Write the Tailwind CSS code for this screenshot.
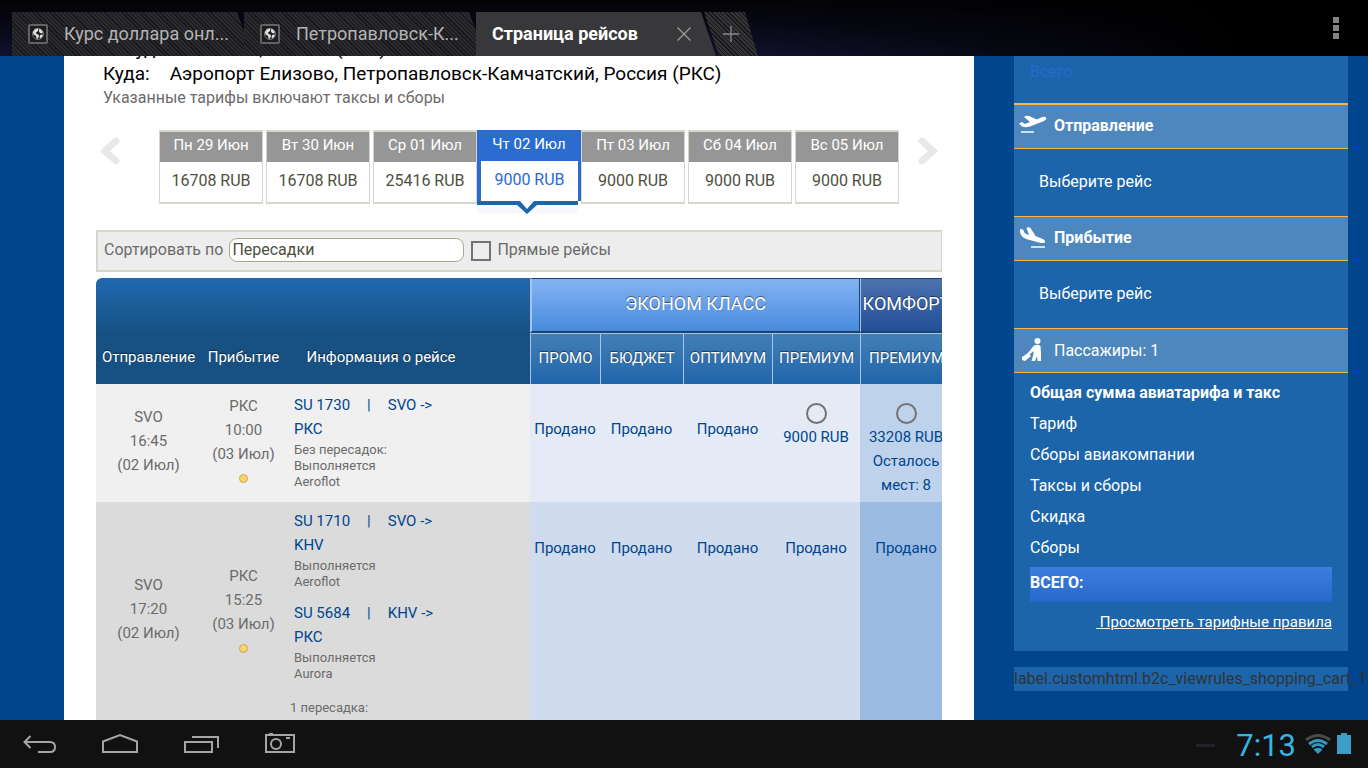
<!DOCTYPE html>
<html lang="ru">
    <head>
        <meta charset="UTF-8" />
        <meta name="viewport" content="width=device-width, initial-scale=1.0" />
        <title>Страница рейсов</title>
        <script src="https://cdn.jsdelivr.net/npm/@tailwindcss/browser@4"></script>
    </head>
    <body class="flex h-screen flex-col overflow-hidden bg-[#00458d] font-[Roboto,sans-serif]">
        <!-- browser tabs -->
        <header class="flex h-14 shrink-0 items-end bg-linear-to-b from-[#030306] to-[#11112c] pl-3">
            <button class="flex h-11 w-[232px] items-center gap-4 bg-[repeating-linear-gradient(45deg,#17171b_0px_1px,#2a2a2e_1px_3px)] pl-4 text-left text-lg text-[#b4b4b4] [clip-path:polygon(0_0,calc(100%-7px)_0,100%_20px,100%_100%,0_100%)]">
                <svg class="h-5 w-5 shrink-0" viewBox="0 0 20 20">
                    <rect x="1" y="1" width="18" height="18" rx="1" fill="#1c1c1c" stroke="#626262" stroke-width="2" />
                    <circle cx="10" cy="10" r="5.5" fill="#1c1c1c" stroke="#777" />
                    <path d="M5 8l2-3 2.500-.5 1 1.500-1 1.500-1.500 1 .5 1.500 2 .5.5 2-1.500 2.500-1-.5-.5-2.500-2.500-1.500zM11 5l2 .5 2 2.500-1 1.500-2-.5-1-1.500zM12 11l2-.5 1 .5-1 2-1.500 1.500-1-1z" fill="#ddd" />
                </svg>
                <span>Курс доллара онл...</span>
            </button>
            <button class="flex h-11 w-[232px] items-center gap-4 bg-[repeating-linear-gradient(45deg,#17171b_0px_1px,#2a2a2e_1px_3px)] pl-4 text-left text-lg text-[#b4b4b4] [clip-path:polygon(0_0,calc(100%-7px)_0,100%_20px,100%_100%,0_100%)]">
                <svg class="h-5 w-5 shrink-0" viewBox="0 0 20 20">
                    <rect x="1" y="1" width="18" height="18" rx="1" fill="#1c1c1c" stroke="#626262" stroke-width="2" />
                    <circle cx="10" cy="10" r="5.5" fill="#1c1c1c" stroke="#777" />
                    <path d="M5 8l2-3 2.500-.5 1 1.500-1 1.500-1.500 1 .5 1.500 2 .5.5 2-1.500 2.500-1-.5-.5-2.500-2.500-1.500zM11 5l2 .5 2 2.500-1 1.500-2-.5-1-1.500zM12 11l2-.5 1 .5-1 2-1.500 1.500-1-1z" fill="#ddd" />
                </svg>
                <span>Петропавловск-К...</span>
            </button>
            <div class="flex h-11 w-60 items-center justify-between bg-[#38383a] pr-6 pl-4 text-lg font-bold text-white [clip-path:polygon(0_0,calc(100%-15px)_0,100%_100%,0_100%)]">
                <button>Страница рейсов</button>
                <button aria-label="Закрыть" class="text-[#9b9b9b]">
                    <svg class="h-4 w-4" viewBox="0 0 16 16" fill="none" stroke="currentColor" stroke-width="1.3"><path d="M1.500 1.500l13 13M14.500 1.500l-13 13" /></svg>
                </button>
            </div>
            <button aria-label="Новая вкладка" class="-ml-3 flex h-11 w-[54px] items-center justify-center bg-[repeating-linear-gradient(45deg,#17171b_0px_1px,#333335_1px_3px)] text-[#8a8a8a] [clip-path:polygon(0_0,calc(100%-13px)_0,100%_100%,15px_100%)]">
                <svg class="h-[18px] w-[18px]" viewBox="0 0 18 18" fill="none" stroke="currentColor" stroke-width="1.3"><path d="M9 1v16M1 9h16" /></svg>
            </button>
            <div class="flex h-full grow items-center justify-end bg-linear-to-r from-transparent to-black to-80% pr-[29px]">
                <button aria-label="Меню" class="flex flex-col gap-[2px]">
                    <span class="h-[6px] w-[6px] bg-[#858585]"></span>
                    <span class="h-[6px] w-[6px] bg-[#858585]"></span>
                    <span class="h-[6px] w-[6px] bg-[#858585]"></span>
                </button>
            </div>
        </header>

        <div class="flex min-h-0 grow overflow-hidden">
            <main class="ml-16 min-w-0 grow overflow-hidden bg-white px-8">
                <div class="-mt-5 pl-[7px] text-[19px] leading-[25px] text-black">
                    <p>Откуда:<span class="ml-5">Москва, Россия (SVO)</span></p>
                    <p>Куда:<span class="ml-5">Аэропорт Елизово, Петропавловск-Камчатский, Россия (РКС)</span></p>
                    <p class="text-base leading-6 text-[#6b6b6b]">Указанные тарифы включают таксы и сборы</p>
                </div>

                <!-- price by day -->
                <div class="mt-5 flex h-[74px] pr-[2px] pl-[2px]">
                    <button aria-label="Предыдущие даты" class="mt-[6px] h-[30px] w-6">
                        <svg class="h-full w-full" viewBox="0 0 24 30" fill="none" stroke="#e8e8e8" stroke-width="7" stroke-linecap="round"><path d="M18 5L7 15l11 10" /></svg>
                    </button>
                    <div class="ml-[37px] flex gap-[3px] text-center text-base text-[#4f4f40]">
                        <button class="flex w-[104px] flex-col border border-t-2 border-b-2 border-[#d5d6cc]">
                            <span class="h-[30px] w-full bg-[#969696] text-[15px] leading-[26px] text-white">Пн 29 Июн</span>
                            <span class="w-full leading-[38px]">16708 RUB</span>
                        </button>
                        <button class="flex w-[104px] flex-col border border-t-2 border-b-2 border-[#d5d6cc]">
                            <span class="h-[30px] w-full bg-[#969696] text-[15px] leading-[26px] text-white">Вт 30 Июн</span>
                            <span class="w-full leading-[38px]">16708 RUB</span>
                        </button>
                        <button class="flex w-[104px] flex-col border border-t-2 border-b-2 border-[#d5d6cc]">
                            <span class="h-[30px] w-full bg-[#969696] text-[15px] leading-[26px] text-white">Ср 01 Июл</span>
                            <span class="w-full leading-[38px]">25416 RUB</span>
                        </button>
                        <button class="relative -mx-[3px] flex w-[104px] flex-col text-[#2a6ccf]">
                            <span class="h-[31px] w-full bg-[#2a6ccf] text-[15px] leading-[28px] text-white">Чт 02 Июл</span>
                            <span class="h-10 w-full border-r-[3px] border-l-4 border-[#2a6ccf] bg-white leading-[38px]">9000 RUB</span>
                            <svg class="absolute top-[71px] left-0 h-[13px] w-[101px]" viewBox="0 0 101 13">
                                <path d="M0 0h101v13H0z" fill="#f7f9ff" />
                                <path d="M0 0h101v4H60L50 13 40 4H0z" fill="#1b66ad" />
                                <path d="M43 0h14l-7 8z" fill="#fff" />
                            </svg>
                        </button>
                        <button class="flex w-[104px] flex-col border border-t-2 border-b-2 border-[#d5d6cc]">
                            <span class="h-[30px] w-full bg-[#969696] text-[15px] leading-[26px] text-white">Пт 03 Июл</span>
                            <span class="w-full leading-[38px]">9000 RUB</span>
                        </button>
                        <button class="flex w-[104px] flex-col border border-t-2 border-b-2 border-[#d5d6cc]">
                            <span class="h-[30px] w-full bg-[#969696] text-[15px] leading-[26px] text-white">Сб 04 Июл</span>
                            <span class="w-full leading-[38px]">9000 RUB</span>
                        </button>
                        <button class="flex w-[104px] flex-col border border-t-2 border-b-2 border-[#d5d6cc]">
                            <span class="h-[30px] w-full bg-[#969696] text-[15px] leading-[26px] text-white">Вс 05 Июл</span>
                            <span class="w-full leading-[38px]">9000 RUB</span>
                        </button>
                    </div>
                    <button aria-label="Следующие даты" class="mt-[6px] ml-auto h-[30px] w-6">
                        <svg class="h-full w-full" viewBox="0 0 24 30" fill="none" stroke="#e8e8e8" stroke-width="7" stroke-linecap="round"><path d="M6 5l11 10L6 25" /></svg>
                    </button>
                </div>

                <form class="mt-[26px] flex h-[42px] items-center border-2 border-r border-[#d5d6cc] bg-[#ededed] pb-[2px] pl-[6px] text-base text-[#6b6b6b]">
                    <label for="sort">Сортировать по</label>
                    <select id="sort" class="ml-[6px] h-6 w-[235px] appearance-none rounded-lg border border-[#a9a990] bg-white pl-[2px] leading-5 text-[#4f4f40]">
                        <option>Пересадки</option>
                    </select>
                    <input type="checkbox" id="direct" class="mt-[2px] ml-[7px] h-5 w-5 appearance-none border-2 border-[#737373]" />
                    <label for="direct" class="ml-[6px]">Прямые рейсы</label>
                </form>

                <div class="mt-[6px] overflow-hidden rounded-tl-md">
                    <table class="w-[856px] table-fixed border-separate border-spacing-0 text-center text-[15px] leading-6 text-[#00458d]">
                        <colgroup>
                            <col class="w-[105px]" />
                            <col class="w-[85px]" />
                            <col class="w-[244px]" />
                            <col class="w-[70px]" />
                            <col class="w-[83px]" />
                            <col class="w-[89px]" />
                            <col class="w-[88px]" />
                            <col />
                        </colgroup>
                        <thead class="text-white [&_th]:font-normal [&_th]:text-shadow-[0_-1px_1px_rgb(0_0_0/0.5)]">
                            <tr class="h-[55px]">
                                <th rowspan="2" class="bg-linear-to-b from-[#1f69b0] to-[#175082] to-55% pb-[15px] align-bottom">Отправление</th>
                                <th rowspan="2" class="bg-linear-to-b from-[#1f69b0] to-[#175082] to-55% pb-[15px] align-bottom">Прибытие</th>
                                <th rowspan="2" class="bg-linear-to-b from-[#1f69b0] to-[#175082] to-55% pr-[54px] pb-[15px] align-bottom">Информация о рейсе</th>
                                <th colspan="4" class="border-t border-r border-b-2 border-l-2 border-t-[#17446f] border-r-[#17446f] border-b-[#17446f] border-l-[#a9c3ea] bg-linear-to-b from-[#85b3f3] to-[#468bdd] pb-[2px] text-lg">ЭКОНОМ КЛАСС</th>
                                <th class="border-t border-b-2 border-l border-t-[#17446f] border-b-[#17446f] border-l-[#a9c3ea] bg-linear-to-b from-[#4c73af] to-[#234f97] pb-[2px] text-lg"><span class="-mx-4">КОМФОРТ</span></th>
                            </tr>
                            <tr class="h-[51px] [&_th]:border-t [&_th]:border-l [&_th]:border-[#a9c3ea] [&_th]:bg-linear-to-b [&_th]:from-[#427fb6] [&_th]:to-[#2065ab] [&_th]:pb-[3px]">
                                <th>ПРОМО</th>
                                <th>БЮДЖЕТ</th>
                                <th>ОПТИМУМ</th>
                                <th>ПРЕМИУМ</th>
                                <th>ПРЕМИУМ</th>
                            </tr>
                        </thead>
                        <tbody>
                            <tr class="h-[118px]">
                                <td class="bg-[#f0f0f0] pb-1 text-[#6b6b6b]">SVO<br />16:45<br />(02 Июл)</td>
                                <td class="bg-[#f0f0f0] text-[#6b6b6b]">
                                    РКС<br />10:00<br />(03 Июл)
                                    <span class="mx-auto mt-2 mb-[10px] block h-[9px] w-[9px] rounded-full border border-[#cfa64a] bg-[#f7d66e]"></span>
                                </td>
                                <td class="bg-[#f0f0f0] pt-[9px] pl-2 text-left align-top">
                                    <p><a href="#">SU 1730</a><span class="mx-[17px]">|</span>SVO -&gt;<br />РКС</p>
                                    <p class="mt-px text-[13px] leading-4 text-[#6b6b6b]">Без пересадок:<br />Выполняется<br />Aeroflot</p>
                                </td>
                                <td class="bg-[#e4ebf6] pt-[33px] align-top">Продано</td>
                                <td class="bg-[#e4ebf6] pt-[33px] align-top">Продано</td>
                                <td class="bg-[#e4ebf6] pt-[33px] align-top">Продано</td>
                                <td class="bg-[#e4ebf6] pt-[19px] align-top">
                                    <input type="radio" name="fare" id="fare-econom" class="mx-auto mb-px block h-[21px] w-[21px] appearance-none rounded-full border-2 border-[#737373]" />
                                    <label for="fare-econom">9000 RUB</label>
                                </td>
                                <td class="bg-[#bed2ec] pt-[19px] align-top">
                                    <input type="radio" name="fare" id="fare-comfort" class="mx-auto mb-px block h-[21px] w-[21px] appearance-none rounded-full border-2 border-[#737373]" />
                                    <label for="fare-comfort">33208 RUB<br />Осталось<br />мест: 8</label>
                                </td>
                            </tr>
                            <tr class="h-[231px]">
                                <td class="bg-[#dbdbdb] pb-[17px] text-[#6b6b6b]">SVO<br />17:20<br />(02 Июл)</td>
                                <td class="bg-[#dbdbdb] pb-[9px] text-[#6b6b6b]">
                                    РКС<br />15:25<br />(03 Июл)
                                    <span class="mx-auto mt-2 mb-[10px] block h-[9px] w-[9px] rounded-full border border-[#cfa64a] bg-[#f7d66e]"></span>
                                </td>
                                <td class="bg-[#dbdbdb] pt-[7px] pl-2 text-left align-top">
                                    <p><a href="#">SU 1710</a><span class="mx-[17px]">|</span>SVO -&gt;<br />KHV</p>
                                    <p class="mt-px text-[13px] leading-4 text-[#6b6b6b]">Выполняется<br />Aeroflot</p>
                                    <p class="mt-[11px]"><a href="#">SU 5684</a><span class="mx-[17px]">|</span>KHV -&gt;<br />РКС</p>
                                    <p class="mt-px text-[13px] leading-4 text-[#6b6b6b]">Выполняется<br />Aurora</p>
                                    <p class="mt-[18px] -ml-1 text-[13px] leading-4 text-[#6b6b6b]">1 пересадка:</p>
                                </td>
                                <td class="bg-[#d0dbee] pt-[34px] align-top">Продано</td>
                                <td class="bg-[#d0dbee] pt-[34px] align-top">Продано</td>
                                <td class="bg-[#d0dbee] pt-[34px] align-top">Продано</td>
                                <td class="bg-[#d0dbee] pt-[34px] align-top">Продано</td>
                                <td class="bg-[#9bbbe2] pt-[34px] align-top">Продано</td>
                            </tr>
                        </tbody>
                    </table>
                </div>
            </main>

            <!-- cart -->
            <aside class="mr-5 ml-10 w-[334px] shrink-0 text-base text-white">
                <div class="h-[595px] bg-[#1c65aa]">
                    <p class="h-[47px] px-4 pt-1 text-[#276bce]">Всего:</p>
                    <h2 class="flex h-[46px] items-center gap-[7px] border-t-2 border-b border-[#fdb441] bg-[#4e87bd] pb-[2px] pl-1 font-bold">
                        <svg class="h-7 w-[29px]" viewBox="0 0 29 28" fill="#fff">
                            <path d="M1 11.500l3-1.500 3 2 5-2-6-5q2-2 5-1l8 3.500 4-2q4-1.500 5 0t-2 3.500L12 14.500q-5 1.500-8 0z" />
                            <path d="M3 19h13v2H3z" fill="#cfe0f0" />
                        </svg>
                        Отправление
                    </h2>
                    <p class="h-[67px] pl-[25px] leading-[65px]">Выберите рейс</p>
                    <h2 class="flex h-[45px] items-center gap-[7px] border-y border-[#fdb441] bg-[#4e87bd] pb-[2px] pl-1 font-bold">
                        <svg class="h-7 w-[29px]" viewBox="0 0 29 28" fill="#fff">
                            <path d="M2 5l3 .5 2 4 4 1.500-2.500-7q2-1.500 4 0l5 8 6 2.500q4 1 3.500 4-3 1-6 0L8 15Q1 12 2 5z" />
                            <path d="M13 22h14v2H13z" fill="#cfe0f0" />
                        </svg>
                        Прибытие
                    </h2>
                    <p class="h-[67px] pl-[25px] leading-[65px]">Выберите рейс</p>
                    <h2 class="flex h-[45px] items-center gap-[7px] border-y border-[#fdb441] bg-[#4e87bd] pl-1">
                        <svg class="h-7 w-[29px]" viewBox="0 0 29 28" fill="#fff">
                            <circle cx="19.500" cy="4" r="3" />
                            <path d="M16 8.500q4-1.500 6.500.5l.5 8v7h-3.500L19 19l-2 5h-3.500l2-7v-3L11 18l-1.500-1.500z" />
                            <path d="M4 20l6-4 3 3-6 5-3-1z" />
                        </svg>
                        Пассажиры: 1
                    </h2>
                    <div class="px-4 pt-1 leading-[31px]">
                        <p class="font-bold">Общая сумма авиатарифа и такс</p>
                        <p>Тариф</p>
                        <p>Сборы авиакомпании</p>
                        <p>Таксы и сборы</p>
                        <p>Скидка</p>
                        <p>Сборы</p>
                        <p class="mt-1 h-[35px] bg-linear-to-b from-[#3c7ddd] to-[#2769cb] font-bold">ВСЕГО:</p>
                        <p class="mt-[5px] text-right text-[15px]"><a href="#" class="underline">&nbsp;Просмотреть тарифные правила</a></p>
                    </div>
                </div>
                <p class="mt-4 h-6 bg-[#1c65aa] leading-6 whitespace-nowrap text-[#333]">label.customhtml.b2c_viewrules_shopping_cart_1</p>
            </aside>
        </div>

        <!-- system bar -->
        <footer class="flex h-12 shrink-0 items-center bg-[#111] pt-[2px] text-[#a5a5a5]">
            <nav class="flex items-center">
                <button aria-label="Назад" class="flex w-20 justify-center">
                    <svg class="h-6 w-9" viewBox="0 0 36 24" fill="none" stroke="currentColor" stroke-width="2"><path d="M8.500 3L2.500 9 8.500 15M3 9h25q5 0 5 5t-5 5H16" /></svg>
                </button>
                <button aria-label="Домой" class="flex w-20 justify-center">
                    <svg class="h-6 w-10" viewBox="0 0 40 24" fill="none" stroke="currentColor" stroke-width="2"><path d="M3 8.500L20 2l17 6.500V19H3z" /></svg>
                </button>
                <button aria-label="Недавние" class="flex w-20 justify-center">
                    <svg class="h-6 w-10" viewBox="0 0 40 24" fill="none" stroke="currentColor" stroke-width="2"><path d="M5 9h27v10H5zM12 4h26v11" /></svg>
                </button>
                <button aria-label="Снимок экрана" class="flex w-20 justify-center">
                    <svg class="h-6 w-8" viewBox="0 0 32 24" fill="none" stroke="currentColor" stroke-width="2"><path d="M2 2h28v17H2zM5 1h4M22 5h4" /><circle cx="12" cy="11" r="5" /></svg>
                </button>
            </nav>
            <div class="ml-auto flex items-center pr-[17px] text-[#33b5e5]">
                <span class="mr-[21px] h-[3px] w-[19px] bg-[#241f28]"></span>
                <span class="mr-[8px] text-[31px] leading-none">7:13</span>
                <svg class="mr-[5px] h-6 w-7" viewBox="0 0 28 24" fill="none" stroke="#3796bd" stroke-width="3">
                    <path d="M2 7q12-9 24 0" stroke="#4a4a4a" />
                    <path d="M5 11q9-7 18 0M8 14q6-5 12 0" />
                    <path d="M9.500 16.500q4.500-3.500 9 0L14 21z" fill="#3796bd" stroke="none" />
                </svg>
                <svg class="h-6 w-[14px]" viewBox="0 0 14 24" fill="#3d9cc6"><path d="M4 0h6v2h4v19H0V2h4z" /></svg>
            </div>
        </footer>
    </body>
</html>
